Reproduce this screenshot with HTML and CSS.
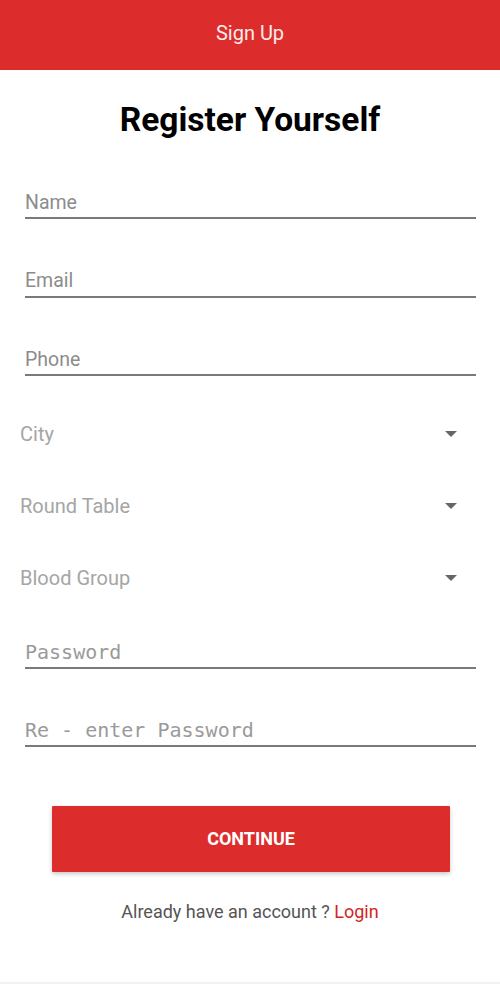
FILE: index.html
```html
<!DOCTYPE html>
<html lang="en">
<head>
    <meta charset="UTF-8">
    <meta name="viewport" content="width=device-width, initial-scale=1.0">
    <title>Sign Up</title>
    <link rel="stylesheet" href="styles.css">
</head>
<body>
    <header class="toolbar">Sign Up</header>

    <main class="page">
        <h1 class="title">Register Yourself</h1>

        <form class="signup-form">
            <input class="field" type="text" placeholder="Name">
            <input class="field" type="email" placeholder="Email">
            <input class="field" type="tel" placeholder="Phone">

            <div class="spinner">
                <span>City</span>
                <svg class="caret" width="12" height="6" viewBox="0 0 12 6"><path d="M0 0h12L6 6z"/></svg>
            </div>
            <div class="spinner">
                <span>Round Table</span>
                <svg class="caret" width="12" height="6" viewBox="0 0 12 6"><path d="M0 0h12L6 6z"/></svg>
            </div>
            <div class="spinner">
                <span>Blood Group</span>
                <svg class="caret" width="12" height="6" viewBox="0 0 12 6"><path d="M0 0h12L6 6z"/></svg>
            </div>

            <input class="field field-mono first-mono" type="password" placeholder="Password">
            <input class="field field-mono" type="password" placeholder="Re - enter Password">

            <button class="btn-continue" type="submit">CONTINUE</button>
        </form>

        <p class="login-link">Already have an account ? <a href="#">Login</a></p>
    </main>

    <div class="bottom-line"></div>
</body>
</html>
```

FILE: styles.css
```css
body {
    margin: 0;
    padding: 0;
    font-family: Roboto, "Liberation Sans", sans-serif;
    background-color: #ffffff;
    width: 500px;
}

.toolbar {
    height: 70px;
    background-color: #dd2c2c;
    color: #fcecec;
    font-size: 20px;
    display: flex;
    justify-content: center;
    align-items: center;
    padding-bottom: 4px;
    box-sizing: border-box;
}

.page {
    height: 912px;
}

.title {
    margin: 0;
    padding-top: 29px;
    text-align: center;
    font-size: 33.5px;
    font-weight: bold;
    line-height: 42px;
    color: #000;
}

.signup-form {
    display: flex;
    flex-direction: column;
    padding-top: 46px;
}

.field {
    display: block;
    box-sizing: content-box;
    width: 451px;
    height: 30px;
    margin: 0 0 46.5px 25px;
    padding: 0;
    border: none;
    border-bottom: 2px solid #7a7a7a;
    font-family: Roboto, "Liberation Sans", sans-serif;
    font-size: 19.5px;
    color: #333;
    background: transparent;
    outline: none;
}

.field::placeholder {
    color: #8c8c8c;
}

.field-mono {
    font-family: "DejaVu Sans Mono", "Liberation Mono", monospace;
    font-size: 20px;
}

.field-mono::placeholder {
    color: #9a9a9a;
}

.spinner {
    display: flex;
    justify-content: space-between;
    align-items: center;
    height: 40px;
    margin: -9px 0 32px 0;
    padding: 0 43px 0 20px;
    font-size: 20px;
    color: #a5a5a5;
}

.spinner + .spinner {
    margin-top: 0;
}

.caret {
    fill: #666;
}

.first-mono {
    margin-top: 7px;
}

.btn-continue {
    align-self: flex-start;
    margin: 12px 0 0 52px;
    width: 398px;
    height: 66px;
    background-color: #dd2c2c;
    color: white;
    border: none;
    border-radius: 1px;
    font-family: Roboto, "Liberation Sans", sans-serif;
    font-size: 18px;
    font-weight: bold;
    box-shadow: 0 2px 4px rgba(0, 0, 0, 0.22);
    cursor: pointer;
}

.login-link {
    margin: 29px 0 0;
    text-align: center;
    font-size: 18px;
    color: #555;
}

.login-link a {
    color: #d32424;
    text-decoration: none;
}

.bottom-line {
    height: 2px;
    background-color: #f1f1f1;
}
```
